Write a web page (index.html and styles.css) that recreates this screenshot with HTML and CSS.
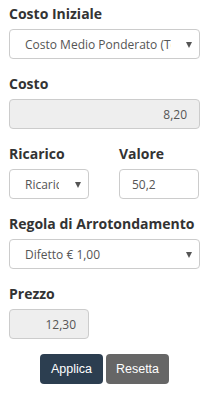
FILE: index.html
```html
<!DOCTYPE html>
<html lang="it">
<head>
    <meta charset="UTF-8">
    <meta name="viewport" content="width=device-width, initial-scale=1.0">
    <title>Calcolo Prezzo</title>
    <link rel="stylesheet" href="styles.css">
</head>
<body>
    <form class="price-form" onsubmit="return false">
        <div class="form-group">
            <label for="costoIniziale">Costo Iniziale</label>
            <div class="select-wrap">
                <select id="costoIniziale" class="form-control">
                    <option selected>Costo Medio Ponderato (Totale)</option>
                    <option>Ultimo Costo</option>
                </select>
            </div>
        </div>

        <div class="form-group">
            <label for="costo">Costo</label>
            <input type="text" id="costo" class="form-control number" value="8,20" readonly>
        </div>

        <div class="form-row">
            <div class="form-group">
                <label for="ricarico">Ricarico</label>
                <div class="select-wrap small">
                    <select id="ricarico" class="form-control">
                        <option selected>Ricarico</option>
                        <option>Margine</option>
                    </select>
                </div>
            </div>
            <div class="form-group">
                <label for="valore">Valore</label>
                <input type="text" id="valore" class="form-control small" value="50,2">
            </div>
        </div>

        <div class="form-group">
            <label for="arrotondamento">Regola di Arrotondamento</label>
            <div class="select-wrap">
                <select id="arrotondamento" class="form-control">
                    <option selected>Difetto € 1,00</option>
                    <option>Eccesso € 1,00</option>
                </select>
            </div>
        </div>

        <div class="form-group">
            <label for="prezzo">Prezzo</label>
            <input type="text" id="prezzo" class="form-control small number" value="12,30" readonly>
        </div>

        <div class="actions">
            <button type="submit" class="btn btn-primary">Applica</button>
            <button type="reset" class="btn btn-default">Resetta</button>
        </div>
    </form>
</body>
</html>
```

FILE: styles.css
```css
body {
    margin: 0;
    font-family: "Open Sans", sans-serif;
    background-color: #fff;
    color: #333;
}

.price-form {
    padding: 4px 10px 0 9px;
}

.form-group {
    margin-bottom: 15px;
}

label {
    display: block;
    font-size: 14px;
    font-weight: bold;
    line-height: 20px;
    margin-bottom: 5px;
    color: #333;
}

.form-control {
    display: block;
    width: 100%;
    height: 30px;
    padding: 4px 12px;
    font-family: "Open Sans", sans-serif;
    font-size: 12px;
    color: #555;
    background-color: #fff;
    border: 1px solid #ccc;
    border-radius: 4px;
    box-sizing: border-box;
}

.form-control[readonly] {
    background-color: #eee;
}

.form-control.number {
    text-align: right;
}

.form-control.small,
.select-wrap.small {
    width: 80px;
}

/* custom select with the small filled arrow */
.select-wrap {
    position: relative;
}

.select-wrap select {
    -webkit-appearance: none;
    appearance: none;
    padding-left: 15px;
    padding-right: 28px;
}

.select-wrap.small select {
    padding-right: 29px;
}

.select-wrap::after {
    content: "";
    position: absolute;
    right: 8px;
    top: 13px;
    border-left: 3.5px solid transparent;
    border-right: 3.5px solid transparent;
    border-top: 6px solid #555;
    pointer-events: none;
}

.form-row {
    display: grid;
    grid-template-columns: 110px 1fr;
}

.actions {
    display: flex;
    justify-content: center;
    gap: 3px;
}

.btn {
    height: 30px;
    width: 63px;
    padding: 0;
    font-family: "Liberation Sans", Arial, sans-serif;
    font-size: 12.5px;
    color: #fff;
    border: none;
    border-radius: 4px;
    cursor: pointer;
}

.btn-primary {
    background-color: #2c3e50;
}

.btn-default {
    background-color: #666;
}
```
